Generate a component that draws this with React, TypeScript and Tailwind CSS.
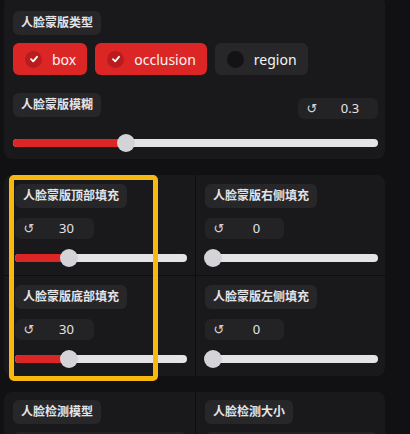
import React from "react";

const CJK = "font-['Noto_Sans','Noto_Sans_CJK_SC',sans-serif]";

function Label({ text }: { text: string }) {
  return (
    <div
      className={`flex h-[24px] w-fit items-center rounded-md bg-[#27272a] px-[8px] text-[12px] font-bold text-[#e4e4e7] ${CJK}`}
    >
      {text}
    </div>
  );
}

function NumberBox({ value, width }: { value: string; width: number }) {
  return (
    <div
      className="flex h-[21px] items-center rounded-md bg-[#232326] text-[13px] text-[#e4e4e7]"
      style={{ width }}
    >
      <span className="w-[28px] text-center font-['DejaVu_Sans',sans-serif] text-[13px] leading-none text-[#d4d4d8]">
        ↺
      </span>
      <span className="flex-1 pr-[4px] text-center font-['Noto_Sans',sans-serif]">{value}</span>
    </div>
  );
}

function Slider({ pos }: { pos: number }) {
  // pos = thumb centre in px from track start
  return (
    <div className="relative h-[18px] w-full">
      <div className="absolute inset-x-0 top-[5px] h-[8px] rounded-full bg-[#e4e4e7]" />
      <div
        className="absolute left-0 top-[5px] h-[8px] rounded-l-full bg-[#dc2626]"
        style={{ width: pos }}
      />
      <div
        className="absolute top-0 h-[18px] w-[18px] rounded-full bg-[#d4d4d8]"
        style={{ left: pos - 9 }}
      />
    </div>
  );
}

function Check({ label, on }: { label: string; on: boolean }) {
  return (
    <div
      className={`flex h-[32px] items-center rounded-md pl-[12px] pr-[11px] ${on ? "bg-[#dc2626]" : "bg-[#27272a]"}`}
    >
      <span
        className={`flex h-[17px] w-[17px] items-center justify-center rounded-full ${on ? "bg-[#b91c1c]" : "bg-[#131315]"}`}
      >
        {on && (
          <svg width="10" height="10" viewBox="0 0 10 10">
            <path d="M2 5.2 L4.2 7.3 L8 2.8" fill="none" stroke="#fff" strokeWidth="1.8" strokeLinecap="round" strokeLinejoin="round" />
          </svg>
        )}
      </span>
      <span className="ml-[10px] font-['Noto_Sans',sans-serif] text-[14px] text-[#f4f4f5]">{label}</span>
    </div>
  );
}

function Cell({ label, value, pos, className }: { label: string; value: string; pos: number; className: string }) {
  return (
    <div className={`flex flex-col bg-[#19191c] pt-[9px] pb-[8px] ${className}`}>
      <Label text={label} />
      <div className="mt-[10px]">
        <NumberBox value={value} width={79} />
      </div>
      <div className="mt-[10px]">
        <Slider pos={pos} />
      </div>
    </div>
  );
}

export default function App() {
  return (
    <div className="relative h-[434px] w-[410px] overflow-hidden bg-[#111113]">
      <div className="ml-[4px] w-[381px]">
        {/* mask type + blur */}
        <div className="-mt-[4px] rounded-lg bg-[#19191c] pt-[15px] pr-[7px] pb-[7px] pl-[9px]">
          <Label text="人脸蒙版类型" />
          <div className="mt-[8px] flex gap-[8px]">
            <Check label="box" on />
            <Check label="occlusion" on />
            <Check label="region" on={false} />
          </div>
          <div className="mt-[18px] flex items-start justify-between">
            <Label text="人脸蒙版模糊" />
            <div className="mt-[5px]">
              <NumberBox value="0.3" width={80} />
            </div>
          </div>
          <div className="mt-[15px]">
            <Slider pos={113} />
          </div>
        </div>

        {/* padding grid */}
        <div className="mt-[16px] grid grid-cols-[191px_1fr] gap-px overflow-hidden rounded-lg bg-[#0e0e10]">
          <Cell label="人脸蒙版顶部填充" value="30" pos={54} className="pl-[11px] pr-[8px]" />
          <Cell label="人脸蒙版右侧填充" value="0" pos={8} className="pl-[9px] pr-[7px]" />
          <Cell label="人脸蒙版底部填充" value="30" pos={54} className="pl-[11px] pr-[8px]" />
          <Cell label="人脸蒙版左侧填充" value="0" pos={8} className="pl-[9px] pr-[7px]" />
        </div>

        {/* detector */}
        <div className="mt-[16px] grid grid-cols-[191px_1fr] gap-px overflow-hidden rounded-t-lg bg-[#0e0e10]">
          <div className="h-[60px] bg-[#19191c] pt-[8px] pl-[9px] pr-[8px]">
            <Label text="人脸检测模型" />
            <div className="mt-[8px] h-[30px] rounded-md bg-[#232326]" />
          </div>
          <div className="h-[60px] bg-[#19191c] pt-[8px] pl-[9px] pr-[7px]">
            <Label text="人脸检测大小" />
            <div className="mt-[8px] h-[30px] rounded-md bg-[#232326]" />
          </div>
        </div>
      </div>

      {/* highlight annotation */}
      <div className="pointer-events-none absolute left-[9px] top-[175px] h-[206px] w-[149px] rounded-[5px] border-[5px] border-[#f7b80f]" />
    </div>
  );
}
